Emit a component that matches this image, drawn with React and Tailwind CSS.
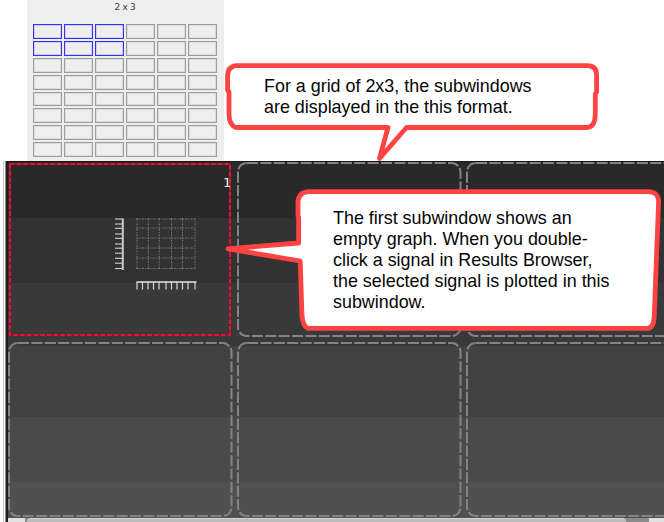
import React from "react";

const ROWS = Array.from({ length: 8 }, (_, i) => i);
const COLS = Array.from({ length: 6 }, (_, i) => i);

function GridPicker() {
  return (
    <div className="ml-[27px] h-[161px] w-[197px] bg-[#eeeeee] pl-[6px] pr-[7px]">
      <div className="h-[24px] pt-[1px] text-center font-['DejaVu_Sans',sans-serif] text-[9px] leading-[13px] tracking-[-0.3px] text-[#3c3c3c]">
        2 x 3
      </div>
      <div className="grid h-[133px] grid-cols-6 grid-rows-8 gap-x-[2px] gap-y-[2px]">
        {ROWS.map((r) =>
          COLS.map((c) => (
            <div
              key={`${r}-${c}`}
              className={
                r < 2 && c < 3
                  ? "border border-[#3333f6] shadow-[inset_0_0_0_1px_#cfcff2]"
                  : "border border-[#9d9d9d] shadow-[inset_0_0_0_1px_#dcdcdc]"
              }
            />
          ))
        )}
      </div>
    </div>
  );
}

function Outline({ selected }) {
  return selected ? (
    <svg className="block h-[176px] w-[229px] shrink-0" viewBox="0 0 229 176">
      <rect x="2" y="2" width="220" height="171" fill="none" stroke="#6b2330" strokeWidth="2" />
      <rect x="2" y="2" width="220" height="171" fill="none" stroke="#e8112f" strokeWidth="2" strokeDasharray="4.7 2" />
    </svg>
  ) : (
    <svg className="block h-[176px] w-[229px] shrink-0" viewBox="0 0 229 176">
      <rect x="1" y="1" width="222.5" height="173" rx="9" fill="none" stroke="#838383" strokeWidth="2" strokeDasharray="11.1 2.3" />
    </svg>
  );
}

const Y_TICKS = [1, 6, 10.3, 16, 20.3, 26, 30.2, 35.2, 40.3, 45.2, 50.5];
const X_TICKS = [1, 6.5, 12, 17.5, 23, 30, 35.5, 41, 46.5, 52, 59];
const GRID_X = [0.5, 11.8, 22.7, 35, 46, 58.5];
const GRID_Y = [1, 10, 20, 30, 40, 50.5];

function EmptyGraph() {
  return (
    <svg className="block h-[76px] w-[84px]" viewBox="0 0 84 76">
      <g stroke="#d4d4d4" strokeWidth="1.1">
        {Y_TICKS.map((y) => (
          <line key={y} x1="0" x2="8" y1={y} y2={y} />
        ))}
        <line x1="7.8" x2="7.8" y1="0.5" y2="52" strokeWidth="2" stroke="#c8c8c8" />
      </g>
      <g transform="translate(21.5 0)" stroke="#777777" strokeWidth="1">
        {GRID_X.map((x) => (
          <line key={`x${x}`} x1={x} x2={x} y1="0" y2="52" strokeDasharray="2 1.2 1 1.2" />
        ))}
        {GRID_Y.map((y) => (
          <line key={`y${y}`} x1="0" x2="59" y1={y} y2={y} strokeDasharray="2 1.2 1 1.2" />
        ))}
      </g>
      <g transform="translate(21 64)" stroke="#d6d6d6" strokeWidth="1.2">
        {X_TICKS.map((x) => (
          <line key={x} x1={x} x2={x} y1="0" y2="7.5" />
        ))}
        <line x1="0.5" x2="60.5" y1="0" y2="0" strokeWidth="1.5" stroke="#e6e6e6" />
      </g>
    </svg>
  );
}

function Workspace() {
  return (
    <div className="flex h-[361px]">
      <div className="ml-[3px] w-px bg-[#c9c9c9]" />
      <div className="ml-px w-px bg-[#8a8a8a]" />
      <div className="relative flex h-[361px] w-[658px] flex-col overflow-hidden border-l-[2px] border-t border-l-[#202020] border-t-[#171717] bg-[linear-gradient(to_bottom,#292929_0_56px,#323232_56px_121px,#393939_121px_184px,#424242_184px_255px,#4a4a4a_255px_320px,#505050_320px)]">
        <div className="flex h-[356px] shrink-0 flex-col gap-[4px]">
          <div className="flex">
            <div className="relative">
              <Outline selected />
              <div className="absolute left-[107px] top-[56px]">
                <EmptyGraph />
              </div>
              <div className="absolute left-[215px] top-[13px] font-['DejaVu_Sans',sans-serif] text-[13px] leading-[16px] text-[#f2f2f2]">
                1
              </div>
            </div>
            <Outline />
            <Outline />
          </div>
          <div className="flex">
            <Outline />
            <Outline />
            <Outline />
          </div>
        </div>
        <div className="flex h-[4px] shrink-0 bg-[#8b8b8b]">
          <div className="w-[17px] bg-[#e2e2e2]" />
          <div className="ml-[2px] h-[10px] w-[599px] rounded-t-[4px] border-t border-[#d6d6d6] bg-[#bcbcbc]" />
          <div className="ml-auto w-[15px] bg-[#e0e0e0]" />
        </div>
      </div>
    </div>
  );
}

function Callouts() {
  return (
    <svg className="absolute left-0 top-0 h-[522px] w-[664px]" viewBox="0 0 664 522">
      <g fill="#fff" stroke="#ff4343" strokeWidth="4.8" strokeLinejoin="round">
        <path d="M237 65.6H587Q596.6 65.6 596.6 75V92L595.3 94V114Q595 127.5 587 127.5H406.5L379.5 158.5L388 127.5H236Q229 125 229 114V92L227.6 90V75Q228 66 237 65.6Z" />
        <path d="M309 191.6H648Q659 192 658.6 202L654.2 317Q653.5 328.4 647 328.4H308Q303 326 302 316L300.2 261L228 248.8L298.7 243V218L298 216V201Q299 192 309 191.6Z" />
      </g>
      <g className="font-['Liberation_Sans',Arial,sans-serif] text-[17.9px]" fill="#050505">
        <text x="264" y="92">For a grid of 2x3, the subwindows</text>
        <text x="264" y="113">are displayed in the this format.</text>
        <text x="333" y="224">The first subwindow shows an</text>
        <text x="333" y="245">empty graph. When you double-</text>
        <text x="333" y="266">click a signal in Results Browser,</text>
        <text x="333" y="287">the selected signal is plotted in this</text>
        <text x="333" y="308">subwindow.</text>
      </g>
    </svg>
  );
}

export default function App() {
  return (
    <div className="relative h-[522px] w-[664px] overflow-hidden bg-[#fefefe]">
      <GridPicker />
      <Workspace />
      <Callouts />
    </div>
  );
}
